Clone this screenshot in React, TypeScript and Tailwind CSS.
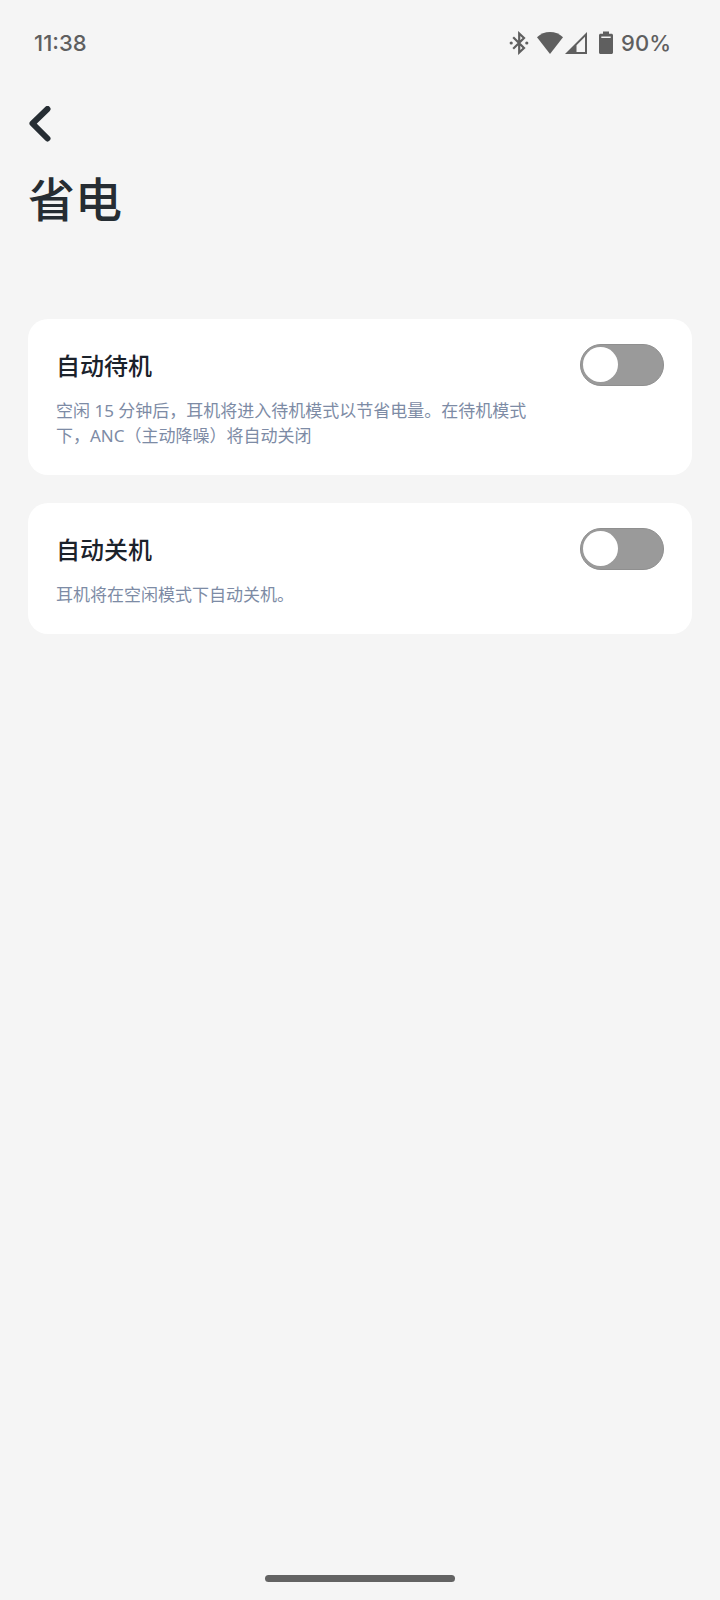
import { useState } from 'react';

interface PowerSetting {
  id: string;
  title: string;
  description: string;
}

const settings: PowerSetting[] = [
  {
    id: 'auto-standby',
    title: '自动待机',
    description:
      '空闲 15 分钟后，耳机将进入待机模式以节省电量。在待机模式下，ANC（主动降噪）将自动关闭',
  },
  {
    id: 'auto-off',
    title: '自动关机',
    description: '耳机将在空闲模式下自动关机。',
  },
];

function BluetoothIcon() {
  return (
    <svg width="20" height="24" viewBox="0 0 20 24" fill="none" aria-hidden="true">
      <path d="M4.200 6.200 15 17l-4.800 4.500v-19L15 7 4.200 17.800" stroke="currentColor" strokeWidth="2.200" />
      <circle cx="2.200" cy="12" r="1.600" fill="currentColor" />
      <circle cx="17.800" cy="12" r="1.600" fill="currentColor" />
    </svg>
  );
}

function WifiIcon() {
  return (
    <svg width="26" height="24" viewBox="0 0 26 24" fill="currentColor" aria-hidden="true">
      <path d="M0 6.200C3.600 2.800 8 1 13 1s9.400 1.800 13 5.200L13 23z" />
    </svg>
  );
}

function SignalIcon() {
  return (
    <svg width="22" height="24" viewBox="0 0 22 24" fill="currentColor" aria-hidden="true">
      <path fillRule="evenodd" d="M22 1v22H0zM20 5.800 11.500 14.300V21H20z" />
    </svg>
  );
}

function BatteryIcon() {
  return (
    <svg width="14" height="24" viewBox="0 0 14 24" fill="currentColor" aria-hidden="true">
      <path
        fillRule="evenodd"
        d="M4 .5h6v2.200h2.500c.8 0 1.500.7 1.500 1.500v17.300c0 .8-.7 1.500-1.500 1.500h-11C.7 23 0 22.300 0 21.500V4.200c0-.8.7-1.500 1.500-1.500H4zM2.300 5.400v1.500h9.400V5.400z"
      />
    </svg>
  );
}

function StatusBar() {
  return (
    <div className="flex h-[86px] items-center justify-between pr-[49px] pl-[34px] font-['Inter',sans-serif] text-[22px] font-medium text-[#5f5f5f]">
      <span>11:38</span>
      <div className="flex items-center">
        <BluetoothIcon />
        <div className="ml-2 flex gap-0.5">
          <WifiIcon />
          <SignalIcon />
        </div>
        <div className="ml-3 flex items-center gap-2">
          <BatteryIcon />
          <span>90%</span>
        </div>
      </div>
    </div>
  );
}

function SettingCard({ setting }: { setting: PowerSetting }) {
  const [enabled, setEnabled] = useState(false);

  return (
    <li className="flex items-start gap-8 rounded-[20px] bg-white px-7 py-[25px]">
      <div className="flex-1">
        <label htmlFor={setting.id} className="block text-2xl leading-[42px] font-medium text-[#1b222b]">
          {setting.title}
        </label>
        <p
          id={`${setting.id}-desc`}
          className="mt-3 mb-0.5 font-['Noto_Sans','Noto_Sans_CJK_SC',sans-serif] text-[17px] leading-[25px] text-[#7d8ba5]"
        >
          {setting.description}
        </p>
      </div>
      <input
        id={setting.id}
        type="checkbox"
        role="switch"
        aria-describedby={`${setting.id}-desc`}
        checked={enabled}
        onChange={(e) => setEnabled(e.target.checked)}
        className="h-[42px] w-[84px] shrink-0 cursor-pointer appearance-none rounded-full border border-[#8f8f8f] bg-[#9a9a9a] p-[2px] transition-colors before:block before:size-[35px] before:rounded-full before:bg-white before:transition-transform checked:bg-[#242c35] checked:before:translate-x-[42px]"
      />
    </li>
  );
}

export default function App() {
  return (
    <div className="flex min-h-screen flex-col bg-[#f5f5f5] font-['Noto_Sans_CJK_SC',sans-serif]" lang="zh-CN">
      <StatusBar />
      <header className="px-7 pb-2">
        <button type="button" aria-label="返回" className="block cursor-pointer py-5 text-[#262d33]">
          <svg width="24" height="36" viewBox="0 0 24 36" fill="none" aria-hidden="true">
            <path
              d="M19.500 3 4.500 17.500l15 15"
              stroke="currentColor"
              strokeWidth="6"
              strokeLinecap="round"
              strokeLinejoin="round"
            />
          </svg>
        </button>
        <h1 className="text-[47px] leading-[69px] font-medium text-[#262d33]">省电</h1>
      </header>
      <main className="mt-20 flex-1 px-7">
        <ul className="flex flex-col gap-7">
          {settings.map((setting) => (
            <SettingCard key={setting.id} setting={setting} />
          ))}
        </ul>
      </main>
      <div className="mx-auto mb-[18px] h-[7px] w-[190px] rounded-full bg-[#636363]" />
    </div>
  );
}
